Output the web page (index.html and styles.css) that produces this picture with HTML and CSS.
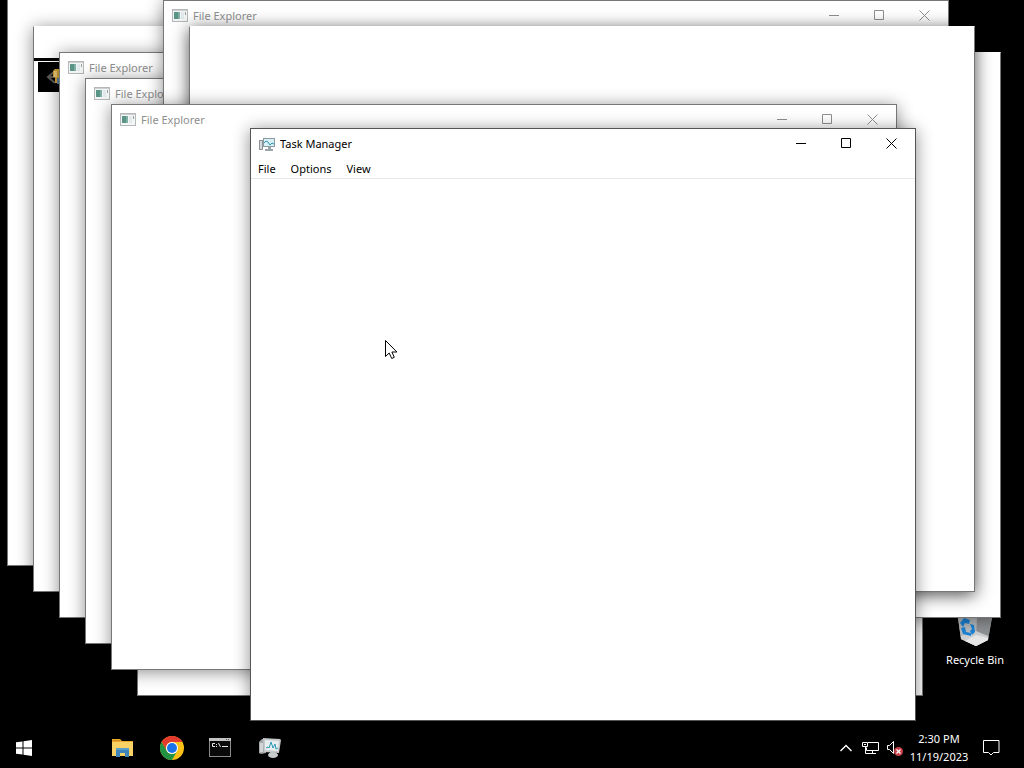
FILE: index.html
```html
<!DOCTYPE html>
<html lang="en">
<head>
    <meta charset="UTF-8">
    <meta name="viewport" content="width=device-width, initial-scale=1.0">
    <title>Desktop</title>
    <link rel="stylesheet" href="styles.css">
</head>
<body>
    <svg class="defs" aria-hidden="true">
        <symbol id="icon-window" viewBox="0 0 16 13">
            <rect x="0.5" y="0.5" width="15" height="12" fill="#f4f6f6" stroke="#b4b8b8"/>
            <rect x="1" y="1" width="14" height="1" fill="#cdd0d0"/>
            <rect x="2" y="3" width="6" height="7" fill="#7fafa5"/>
            <rect x="2" y="3" width="4" height="7" fill="#5a9487"/>
            <rect x="9" y="3" width="3" height="7" fill="#e2eaee"/>
            <rect x="13" y="3" width="1" height="3" fill="#9a9fa2"/>
        </symbol>
        <symbol id="icon-min" viewBox="0 0 11 11">
            <path d="M0 5.500h10" fill="none" stroke="currentColor"/>
        </symbol>
        <symbol id="icon-max" viewBox="0 0 11 11">
            <path d="M0.500 0.500h9v9h-9z" fill="none" stroke="currentColor"/>
        </symbol>
        <symbol id="icon-close" viewBox="0 0 11 11">
            <path d="M0.500 0.500l10 10M10.500 0.500l-10 10" fill="none" stroke="currentColor"/>
        </symbol>
    </svg>

    <main class="desktop">
        <a class="shortcut" href="#recycle-bin">
            <svg width="40" height="36" viewBox="0 0 40 36">
                <path d="M2 0l4 28 15 7 12-6 5-29z" fill="#a3a6a8"/>
                <path d="M2 0l4 28 15 7 1-28z" fill="#b9bcbe"/>
                <path d="M22 7l-1 28 12-6 4-22z" fill="#8f9294"/>
                <path d="M6 25l15-5 12 5v4l-12 6-15-7z" fill="#cfd0d1"/>
                <path d="M21 24l12 3v2l-12 6-11-5z" fill="#e6e6e6"/>
                <path d="M5 12l4-5 6 2-1 4-4-1-2 4zM6 17l4-1 1 5 5 1v3l-8-2zM15 13l4 1 1 7-3 3-2-4 2-2z" fill="#1b84d8"/>
            </svg>
            <span>Recycle Bin</span>
        </a>

        <section class="window win-1"></section>
        <section class="window win-2">
            <div class="black-line"></div>
            <div class="thumb">
                <svg width="22" height="30" viewBox="0 0 22 30">
                    <path d="M17 9l-7 6 7 6M11 15h6" fill="none" stroke="#5f5c56" stroke-width="2"/>
                    <path d="M15 9l2-2h5v14h-5v-6h-2z" fill="#dda93c"/>
                    <path d="M16 9h3v6h-3z" fill="#f4d079"/>
                    <path d="M19 16h3v6h-3z" fill="#5f86a5"/>
                </svg>
            </div>
        </section>
        <section class="window win-3">
            <header class="titlebar">
                <svg class="app-icon" width="16" height="13"><use href="#icon-window"/></svg>
                <h2>File Explorer</h2>
            </header>
        </section>
        <section class="window win-4">
            <header class="titlebar">
                <svg class="app-icon" width="16" height="13"><use href="#icon-window"/></svg>
                <h2>File Explorer</h2>
            </header>
        </section>
        <section class="window win-5"></section>
        <section class="window win-6"></section>
        <section class="window win-7">
            <header class="titlebar">
                <svg class="app-icon" width="16" height="13"><use href="#icon-window"/></svg>
                <h2>File Explorer</h2>
                <button type="button" aria-label="Minimize"><svg width="11" height="11"><use href="#icon-min"/></svg></button>
                <button type="button" aria-label="Maximize"><svg width="11" height="11"><use href="#icon-max"/></svg></button>
                <button type="button" aria-label="Close"><svg width="11" height="11"><use href="#icon-close"/></svg></button>
            </header>
        </section>
        <section class="window win-8"></section>
        <section class="window win-9">
            <header class="titlebar">
                <svg class="app-icon" width="16" height="13"><use href="#icon-window"/></svg>
                <h2>File Explorer</h2>
                <button type="button" aria-label="Minimize"><svg width="11" height="11"><use href="#icon-min"/></svg></button>
                <button type="button" aria-label="Maximize"><svg width="11" height="11"><use href="#icon-max"/></svg></button>
                <button type="button" aria-label="Close"><svg width="11" height="11"><use href="#icon-close"/></svg></button>
            </header>
        </section>

        <section class="window active task-manager">
            <header class="titlebar">
                <svg class="app-icon" width="16" height="16" viewBox="0 0 16 16">
                    <rect x="0.5" y="4.500" width="3" height="9" fill="#d5d9dc" stroke="#8c9296"/>
                    <rect x="4" y="2" width="12" height="9" fill="#8a9aa3"/>
                    <rect x="5" y="3" width="10" height="7" fill="#d9f1f6"/>
                    <path d="M5 7l2-2 2 1 2 3 2-2 2 1" fill="none" stroke="#2d92ad"/>
                    <path d="M9 11h3v2h2v2H6v-2h3z" fill="#9aa5ab"/>
                </svg>
                <h2>Task Manager</h2>
                <button type="button" aria-label="Minimize"><svg width="11" height="11"><use href="#icon-min"/></svg></button>
                <button type="button" aria-label="Maximize"><svg width="11" height="11"><use href="#icon-max"/></svg></button>
                <button type="button" aria-label="Close"><svg width="11" height="11"><use href="#icon-close"/></svg></button>
            </header>
            <nav class="menubar">
                <button type="button">File</button>
                <button type="button">Options</button>
                <button type="button">View</button>
            </nav>
        </section>

        <svg class="cursor" width="13" height="20" viewBox="0 0 13 20">
            <path d="M0.500 0.500v16l3.700-3.500 2.500 5.500 2.600-1.200-2.400-5.300h5z" fill="#fff" stroke="#000"/>
        </svg>
    </main>

    <footer class="taskbar">
        <button class="start" type="button" aria-label="Start">
            <svg width="16" height="16" viewBox="0 0 16 16" fill="#fff">
                <path d="M0 2.300L6.500 1.400V7.500H0zM7.500 1.200L16 0V7.500H7.500zM0 8.500H6.500V14.600L0 13.700zM7.500 8.500H16V16L7.500 14.800z"/>
            </svg>
        </button>
        <div class="apps">
            <button type="button" aria-label="File Explorer">
                <svg width="24" height="24" viewBox="0 0 24 24">
                    <path d="M1 3h8l2 2h11v15H1z" fill="#e8a92f"/>
                    <path d="M1 6h21v14H1z" fill="#f8d264"/>
                    <path d="M2 4h7v1H2z" fill="#d48a1c"/>
                    <path d="M5 12h13v9h-4v-4H9v4H5z" fill="#3f84ba"/>
                    <path d="M5 12h13v2H5z" fill="#5a9fcc"/>
                </svg>
            </button>
            <button type="button" aria-label="Google Chrome">
                <svg width="24" height="24" viewBox="0 0 24 24">
                    <circle cx="12" cy="12" r="12" fill="#fbc116"/>
                    <path d="M1.600 6A12 12 0 0 1 22.400 6H12A6 6 0 0 0 6.800 15z" fill="#e33b2e"/>
                    <path d="M1.600 6A12 12 0 0 0 12 24L17.200 15A6 6 0 0 1 6.800 15z" fill="#229342"/>
                    <circle cx="12" cy="12" r="6" fill="#fff"/>
                    <circle cx="12" cy="12" r="5" fill="#1a73e8"/>
                </svg>
            </button>
            <button type="button" aria-label="Command Prompt">
                <svg width="24" height="24" viewBox="0 0 24 24">
                    <rect x="0.500" y="2.500" width="21" height="18" fill="#0a0a0a" stroke="#8c8c8c"/>
                    <rect x="0" y="2" width="22" height="3" fill="#c4c4c4"/>
                    <path d="M17 3h1v1h-1zM19 3h1v1h-1z" fill="#555"/>
                    <path d="M6 7.500H3.500v3H6M7.500 8v1M7.500 10v1M9.500 7l2 4M13 10.500h6" fill="none" stroke="#e5e5e5"/>
                </svg>
            </button>
            <button type="button" aria-label="Task Manager">
                <svg width="24" height="24" viewBox="0 0 24 24">
                    <path d="M1 6l3-3h4v14l-5 1-2-1z" fill="#a5a9ab"/>
                    <path d="M2 7h3v9H2z" fill="#d2d4d5"/>
                    <path d="M5 2l17 1 1 1-2 13-15-1z" fill="#c6cacb"/>
                    <path d="M7 4l14 1-1 10-13-1z" fill="#e8eeef"/>
                    <path d="M8 12l2-1 1 1 2-6 2 6 2-4 1 5 2-1" fill="none" stroke="#2b9ab8"/>
                    <path d="M12 16h4l1 2h-5z" fill="#8f9496"/>
                    <ellipse cx="15" cy="19" rx="5" ry="3" fill="#c8cccd"/>
                </svg>
            </button>
        </div>
        <div class="tray">
            <button type="button" aria-label="Show hidden icons">
                <svg width="14" height="16" viewBox="0 0 14 16">
                    <path d="M1.500 11L7 5.500 12.500 11" fill="none" stroke="#fff" stroke-width="1.400"/>
                </svg>
            </button>
            <button type="button" aria-label="Network">
                <svg width="17" height="16" viewBox="0 0 17 16" fill="none" stroke="#fff">
                    <path d="M6 2.500h10.500v8H4.500v-3M10.500 10.500v3M7 13.500h7M0.500 2.500h5v4h-5zM3.500 6.500v7h3.500"/>
                    <path d="M2 4.500h2"/>
                </svg>
            </button>
            <button type="button" aria-label="Volume">
                <svg width="17" height="16" viewBox="0 0 17 16">
                    <path d="M1.500 5.500h2L7.500 1.500v12l-4-4h-2z" fill="none" stroke="#fff"/>
                    <circle cx="12.500" cy="11.500" r="4.500" fill="#c9404a"/>
                    <path d="M10.500 9.500l4 4M14.500 9.500l-4 4" stroke="#fff" stroke-width="1.200"/>
                </svg>
            </button>
            <button class="clock" type="button">
                <span>2:30 PM</span>
                <span>11/19/2023</span>
            </button>
            <button class="notifications" type="button" aria-label="Notifications">
                <svg width="17" height="16" viewBox="0 0 17 16">
                    <path d="M0.500 0.500h15.500v12h-5.500L8 15l-2.500-2.500h-5z" fill="none" stroke="#fff"/>
                </svg>
            </button>
        </div>
    </footer>
</body>
</html>
```

FILE: styles.css
```css
* {
    box-sizing: border-box;
}
body {
    display: flex;
    flex-direction: column;
    height: 100vh;
    margin: 0;
    overflow: hidden;
    background-color: #000;
    color: #000;
    font-family: "Noto Sans", "Open Sans", sans-serif;
    font-size: 11px;
    line-height: 18px;
}
button {
    display: flex;
    align-items: center;
    justify-content: center;
    padding: 0;
    border: none;
    background: none;
    color: inherit;
    font: inherit;
}
svg {
    display: block;
    flex: none;
}
.defs {
    position: absolute;
    width: 0;
    height: 0;
}

/* desktop */
.desktop {
    position: relative;
    flex: 1;
}
.shortcut {
    position: absolute;
    left: 938px;
    top: 611px;
    display: flex;
    flex-direction: column;
    align-items: center;
    gap: 4px;
    width: 74px;
    color: #fff;
    text-decoration: none;
}

/* windows */
.window {
    position: absolute;
    width: 786px;
    height: 566px;
    border: 1px solid #777;
    background-color: #fff;
    box-shadow: 0 2px 16px rgba(0, 0, 0, 0.45);
}
.win-1 {
    left: 7px;
    top: 0;
    border-top: none;
}
.win-2 {
    left: 33px;
    top: 26px;
    border-top-color: #fff;
}
.win-3 {
    left: 59px;
    top: 52px;
}
.win-4 {
    left: 85px;
    top: 78px;
}
.win-5 {
    left: 137px;
    top: 130px;
}
.win-6 {
    left: 215px;
    top: 52px;
    border-top-color: #fff;
}
.win-7 {
    left: 163px;
    top: 0;
}
.win-8 {
    left: 189px;
    top: 26px;
    border-top-color: #fff;
    box-shadow: 0 3px 16px rgba(0, 0, 0, 0.7);
}
.win-9 {
    left: 111px;
    top: 104px;
}
.task-manager {
    left: 250px;
    top: 128px;
    width: 666px;
    height: 593px;
    border-color: #555;
}
.titlebar {
    display: flex;
    align-items: center;
    height: 29px;
    padding: 0 1px 0 8px;
    color: #8f8f8f;
}
.titlebar h2 {
    flex: 1;
    margin: 0 0 0 5px;
    font-size: 11px;
    font-weight: normal;
}
.titlebar button {
    width: 45px;
    height: 29px;
}
.active .titlebar {
    color: #000;
}
.menubar {
    display: flex;
    gap: 1px;
    height: 21px;
    padding-top: 1px;
    border-bottom: 1px solid #e8e8e8;
}
.menubar button {
    padding: 0 7px;
}
.black-line {
    height: 3px;
    margin-top: 31px;
    background-color: #000;
}
.thumb {
    width: 60px;
    height: 30px;
    margin: 1px 4px;
    background-color: #000;
}
.cursor {
    position: absolute;
    left: 385px;
    top: 340px;
}

/* taskbar */
.taskbar {
    display: flex;
    justify-content: space-between;
    height: 40px;
    background-color: #000;
    color: #fff;
}
.start {
    width: 48px;
}
.apps {
    display: flex;
    flex: 1;
    margin-left: 50px;
}
.apps button {
    width: 49px;
}
.tray {
    display: flex;
}
.tray button {
    width: 24px;
}
.tray .clock {
    flex-direction: column;
    width: 66px;
}
.tray .notifications {
    width: 38px;
    margin-right: 14px;
}
```
